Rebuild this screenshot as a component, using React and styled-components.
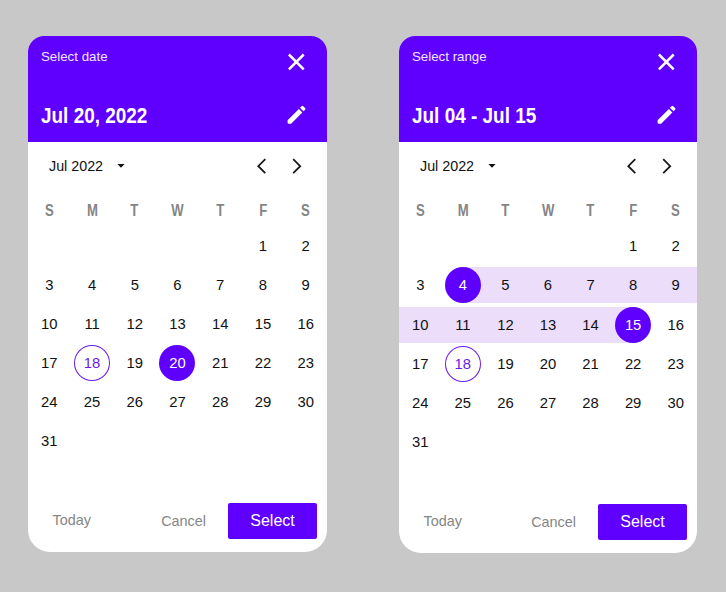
import React from "react";
import styled, { createGlobalStyle } from "styled-components";

const GlobalStyle = createGlobalStyle`
  *, *::before, *::after { box-sizing: border-box; }
  body {
    margin: 0;
    background: #c8c8c8;
    font-family: "Liberation Sans", Arial, sans-serif;
  }
  button {
    border: 0;
    padding: 0;
    background: none;
    font: inherit;
    color: inherit;
    cursor: pointer;
  }
  svg { display: block; }
`;

const Page = styled.main`
  display: grid;
  grid-template-columns: 299px 298px;
  column-gap: 72px;
  align-items: start;
  width: 726px;
  height: 592px;
  padding: 36px 0 0 28px;
`;

const Card = styled.section`
  display: flex;
  flex-direction: column;
  height: ${(p) => p.$height}px;
  background: #fff;
  border-radius: 16px 16px 22px 22px;
  overflow: hidden;
`;

const Header = styled.header`
  display: grid;
  grid-template-columns: 1fr 24px;
  grid-template-rows: 53px 1fr;
  height: 105.5px;
  padding: 0 19px 0 13px;
  background: #5f00ff;
  color: #fff;
`;

const Caption = styled.span`
  padding-top: 13px;
  font-size: 13.3px;
  line-height: 16px;
  color: #efe6ff;
`;

const Title = styled.h1`
  justify-self: start;
  margin: 0;
  padding-top: 13px;
  font-size: 22.5px;
  line-height: 28px;
  font-weight: 700;
  white-space: nowrap;
  transform: scaleX(0.842);
  transform-origin: left;
`;

const HeaderButton = styled.button`
  align-self: start;
  width: 24px;
  height: 24px;
  margin-top: 14px;
`;

const MonthBar = styled.div`
  display: flex;
  align-items: center;
  height: 49.5px;
  padding: 0 20px 0 21px;
`;

const MonthButton = styled.button`
  display: flex;
  align-items: center;
  gap: 14px;
  margin-right: auto;
  font-size: 14.3px;
  color: #111;
`;

const ArrowButton = styled.button`
  width: 20px;
  height: 20px;
  margin-left: 15px;
`;

const Weekdays = styled.div`
  display: grid;
  grid-template-columns: repeat(7, 1fr);
  height: ${(p) => p.$height}px;
  padding-top: 11px;
`;

const Weekday = styled.span`
  text-align: center;
  font-size: 16px;
  line-height: 18px;
  font-weight: 700;
  color: #858585;
  transform: scaleX(0.82);
`;

const Week = styled.div`
  display: grid;
  grid-template-columns: repeat(7, 1fr);
  align-items: center;
  height: ${(p) => p.$pitch}px;
`;

const bandFill = {
  none: "transparent",
  full: "#ecdefb",
  start: "linear-gradient(to right, transparent 50%, #ecdefb 50%)",
  end: "linear-gradient(to right, #ecdefb 50%, transparent 50%)",
};

const DayCell = styled.div`
  display: flex;
  justify-content: center;
  height: 36px;
  background: ${(p) => bandFill[p.$band]};
`;

const Day = styled.button`
  width: 36px;
  height: 36px;
  border-radius: 50%;
  font-size: 14.8px;
  line-height: 36px;
  text-align: center;
  color: ${(p) => (p.$kind === "selected" ? "#fff" : p.$kind === "today" ? "#6a1be8" : "#111")};
  background: ${(p) => (p.$kind === "selected" ? "#5f00ff" : "transparent")};
  box-shadow: ${(p) => (p.$kind === "today" ? "inset 0 0 0 1px #6a1be8" : "none")};
`;

const Footer = styled.footer`
  display: flex;
  align-items: center;
  margin-top: auto;
  margin-bottom: 13px;
  height: 36px;
  padding: 0 10px 0 24.5px;
`;

const TextButton = styled.button`
  font-size: 14.4px;
  color: #858585;
  padding-bottom: ${(p) => p.$lift || 0}px;
  margin-right: ${(p) => p.$after};
`;

const SelectButton = styled.button`
  width: 89px;
  height: 36px;
  border-radius: 2px;
  background: #5f00ff;
  color: #fff;
  font-size: 16px;
`;

const CloseIcon = () => (
  <svg width="24" height="24" viewBox="0 0 24 24" fill="none" stroke="#fff" strokeWidth="2.5">
    <path d="M4.9 4.5 19.7 19.3M19.7 4.5 4.9 19.3" />
  </svg>
);

const PencilIcon = () => (
  <svg width="24" height="24" viewBox="0 0 24 24" fill="#fff">
    <path d="M3.6 17.2 14.9 5.9l3.5 3.5L7.1 20.7H4.6a1 1 0 0 1-1-1zM16 4.8l1.6-1.6a1.2 1.2 0 0 1 1.7 0l1.8 1.8a1.2 1.2 0 0 1 0 1.7l-1.6 1.6z" />
  </svg>
);

const CaretIcon = () => (
  <svg width="8" height="4" viewBox="0 0 8 4">
    <path d="M0.4 0h7.2L4 3.8z" fill="#111" />
  </svg>
);

const Chevron = ({ d }) => (
  <svg width="20" height="20" viewBox="0 0 20 20" fill="none" stroke="#181818" strokeWidth="1.8">
    <path d={d} />
  </svg>
);

const WEEKDAYS = ["S", "M", "T", "W", "T", "F", "S"];
const FIRST_WEEKDAY = 5;
const WEEKS = Array.from({ length: 6 }, (_, week) =>
  Array.from({ length: 7 }, (_, weekday) => {
    const day = week * 7 + weekday - FIRST_WEEKDAY + 1;
    return day > 0 && day <= 31 ? day : null;
  })
);
const TODAY = 18;

function bandOf(day, start, end) {
  if (!day || start === end || day < start || day > end) return "none";
  if (day === start) return "start";
  return day === end ? "end" : "full";
}

function kindOf(day, start, end) {
  if (day === start || day === end) return "selected";
  return day === TODAY ? "today" : "plain";
}

function DatePicker({ caption, title, start, end, height, pitch, weekdayHeight }) {
  return (
    <Card $height={height}>
      <Header>
        <Caption>{caption}</Caption>
        <HeaderButton aria-label="Close"><CloseIcon /></HeaderButton>
        <Title>{title}</Title>
        <HeaderButton aria-label="Edit"><PencilIcon /></HeaderButton>
      </Header>
      <MonthBar>
        <MonthButton>Jul 2022<CaretIcon /></MonthButton>
        <ArrowButton aria-label="Previous month"><Chevron d="M13.3 3.2 6.3 10.2l7 7" /></ArrowButton>
        <ArrowButton aria-label="Next month"><Chevron d="M6.2 3.2 13.2 10.2l-7 7" /></ArrowButton>
      </MonthBar>
      <Weekdays $height={weekdayHeight}>
        {WEEKDAYS.map((name, i) => <Weekday key={i}>{name}</Weekday>)}
      </Weekdays>
      {WEEKS.map((week, i) => (
        <Week key={i} $pitch={pitch}>
          {week.map((day, j) => (
            <DayCell key={j} $band={bandOf(day, start, end)}>
              {day && <Day $kind={kindOf(day, start, end)}>{day}</Day>}
            </DayCell>
          ))}
        </Week>
      ))}
      <Footer>
        <TextButton $after="auto" $lift={2}>Today</TextButton>
        <TextButton $after="22px">Cancel</TextButton>
        <SelectButton>Select</SelectButton>
      </Footer>
    </Card>
  );
}

export default function App() {
  return (
    <>
      <GlobalStyle />
      <Page>
        <DatePicker caption="Select date" title="Jul 20, 2022" start={20} end={20} height={516} pitch={39} weekdayHeight={35.5} />
        <DatePicker caption="Select range" title="Jul 04 - Jul 15" start={4} end={15} height={517} pitch={39.05} weekdayHeight={35.9} />
      </Page>
    </>
  );
}
